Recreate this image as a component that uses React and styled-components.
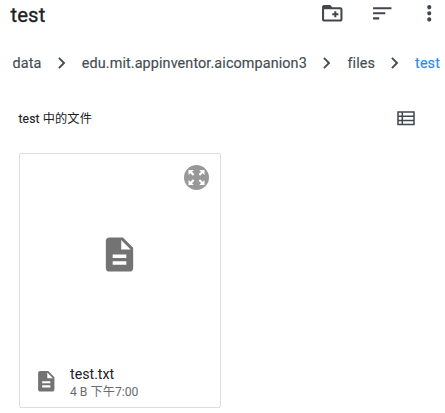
import React from "react";
import styled, { createGlobalStyle } from "styled-components";

const GlobalStyle = createGlobalStyle`
  * { box-sizing: border-box; }
  body {
    margin: 0;
    background: #fff;
    font-family: Roboto, "Noto Sans CJK SC", sans-serif;
    overflow: hidden;
  }
  svg { display: block; flex: none; }
`;

const Page = styled.main`
  width: 445px;
  height: 413px;
  background: #fff;
`;

const Toolbar = styled.header`
  display: flex;
  align-items: center;
  height: 28px;
  padding-left: 10.5px;
  color: #41474d;
`;

const Title = styled.h1`
  flex: 1;
  margin: 0;
  padding-top: 1px;
  font-size: 20.3px;
  line-height: 28px;
  font-weight: 400;
  letter-spacing: 0.1px;
  -webkit-text-stroke: 0.3px currentColor;
  color: #202124;
`;

const Actions = styled.div`
  display: flex;
  padding: 0 4px 2px 0;
`;

const Action = styled.span`
  margin-right: ${(p) => p.$after || 0}px;
`;

const Breadcrumbs = styled.nav`
  display: flex;
  align-items: center;
  height: 30px;
  margin-top: 20px;
  padding-left: 12.5px;
  color: #454c52;
`;

const Crumb = styled.span`
  flex: none;
  width: ${(p) => p.$width}px;
  padding-top: 1px;
  font-size: 14.4px;
  line-height: 20px;
  font-weight: 400;
  letter-spacing: 0.1px;
  -webkit-text-stroke: 0.15px currentColor;
  white-space: nowrap;
  color: ${(p) => (p.$active ? "#2b8be6" : "inherit")};
`;

const Chevron = styled.svg`
  width: 23px;
  height: 23px;
  margin: 0 ${(p) => p.$after}px 0 ${(p) => p.$before}px;
`;

const SectionHeader = styled.div`
  display: flex;
  align-items: center;
  justify-content: space-between;
  height: 30px;
  margin-top: 25px;
  padding: 0 30px 0 18.5px;
  color: #41474d;
`;

const SectionTitle = styled.h2`
  margin: 0;
  padding-top: 1px;
  font-size: 12.2px;
  line-height: 20px;
  font-weight: 400;
  letter-spacing: 0.1px;
  -webkit-text-stroke: 0.15px currentColor;
  color: #202124;
`;

const CjkText = styled.span`
  font-family: "Noto Sans CJK SC", sans-serif;
  font-weight: 400;
  -webkit-text-stroke: 0;
`;

const Card = styled.article`
  display: flex;
  flex-direction: column;
  position: relative;
  width: 202px;
  height: 255px;
  margin: 20px 0 0 19px;
  border: 1px solid #dcdddd;
  border-radius: 2px;
`;

const Preview = styled.div`
  display: flex;
  justify-content: center;
  height: 202px;
  padding: 79.5px 1px 0 0;
  color: #737373;
`;

const ExpandButton = styled.button`
  position: absolute;
  top: 11px;
  right: 11px;
  width: 25px;
  height: 25px;
  padding: 0;
  border: 0;
  border-radius: 50%;
  background: #989898;
  color: #fff;
`;

const FileRow = styled.div`
  display: flex;
  align-items: center;
  gap: 11.5px;
  height: 50px;
  padding-left: 14px;
  color: #737373;
`;

const FileText = styled.div`
  padding-top: 3px;
`;

const FileName = styled.div`
  font-size: 14.2px;
  line-height: 18px;
  color: #202124;
`;

const FileMeta = styled.div`
  font-size: 12.2px;
  line-height: 17px;
  color: #686c70;
`;

const Icon = ({ size, d }) => (
  <svg width={size} height={size} viewBox="0 0 24 24" fill="currentColor">
    <path d={d} />
  </svg>
);

const icons = {
  newFolder:
    "M20 6h-8l-2-2H4c-1.110 0-1.990.890-1.990 2L2 18c0 1.110.890 2 2 2h16c1.110 0 2-.890 2-2V8c0-1.110-.890-2-2-2zm0 12H4V8h16v10zM14 16h2v-2h2v-2h-2v-2h-2v2h-2v2h2z",
  sort: "M3 18h6v-2H3v2zM3 6v2h18V6H3zm0 7h12v-2H3v2z",
  more: "M12 8c1.100 0 2-.9 2-2s-.9-2-2-2-2 .9-2 2 .9 2 2 2zm0 2c-1.100 0-2 .9-2 2s.9 2 2 2 2-.9 2-2-.9-2-2-2zm0 6c-1.100 0-2 .9-2 2s.9 2 2 2 2-.9 2-2-.9-2-2-2z",
  file: "M14 2H6c-1.100 0-1.990.9-1.990 2L4 20c0 1.100.890 2 1.990 2H18c1.100 0 2-.9 2-2V8l-6-6zm2 16H8v-2h8v2zm0-4H8v-2h8v2zm-3-5V3.500L18.500 9H13z",
};

const Separator = ({ before, after }) => (
  <Chevron viewBox="0 0 24 24" fill="currentColor" $before={before} $after={after}>
    <path d="M10 5.500 8.590 6.910 13.170 11.500l-4.580 4.590L10 17.500l6-6z" />
  </Chevron>
);

export default function App() {
  return (
    <Page>
      <GlobalStyle />
      <Toolbar>
        <Title>test</Title>
        <Actions>
          <Action $after={25.2}>
            <Icon size={24.5} d={icons.newFolder} />
          </Action>
          <Action $after={22.3}>
            <Icon size={24.5} d={icons.sort} />
          </Action>
          <Action>
            <Icon size={24.5} d={icons.more} />
          </Action>
        </Actions>
      </Toolbar>
      <Breadcrumbs>
        <Crumb $width={28}>data</Crumb>
        <Separator before={9.3} after={9} />
        <Crumb $width={224}>edu.mit.appinventor.aicompanion3</Crumb>
        <Separator before={9.5} after={9.2} />
        <Crumb $width={27}>files</Crumb>
        <Separator before={8.8} after={8.8} />
        <Crumb $width={26} $active>test</Crumb>
      </Breadcrumbs>
      <SectionHeader>
        <SectionTitle>
          test <CjkText>中的文件</CjkText>
        </SectionTitle>
        <svg width="18" height="15" viewBox="0 0 18 15" fill="none" stroke="currentColor" strokeWidth="1.500">
          <path d="M1 1h16v12.600H1zM5.300 1v12.600M1 5.200h16M1 9.400h16" />
        </svg>
      </SectionHeader>
      <Card>
        <Preview>
          <Icon size={41} d={icons.file} />
        </Preview>
        <ExpandButton aria-label="expand">
          <svg width="25" height="25" viewBox="0 0 25 25" fill="currentColor">
            <path d="M4.500 5h5.300L8 6.800l2.400 2.400-1.500 1.500-2.500-2.500-1.900 1.900zM20.500 5v5.100l-1.900-1.900-2.500 2.500-1.500-1.500L17 6.800 15.200 5zM4.500 20v-5.100l1.900 1.900 2.500-2.500 1.500 1.500L8 18.200 9.800 20zM20.500 20h-5.300l1.800-1.800-2.400-2.400 1.500-1.500 2.500 2.500 1.900-1.900z" />
          </svg>
        </ExpandButton>
        <FileRow>
          <Icon size={24.5} d={icons.file} />
          <FileText>
            <FileName>test.txt</FileName>
            <FileMeta>
              4 B <CjkText>下午</CjkText>7:00
            </FileMeta>
          </FileText>
        </FileRow>
      </Card>
    </Page>
  );
}
